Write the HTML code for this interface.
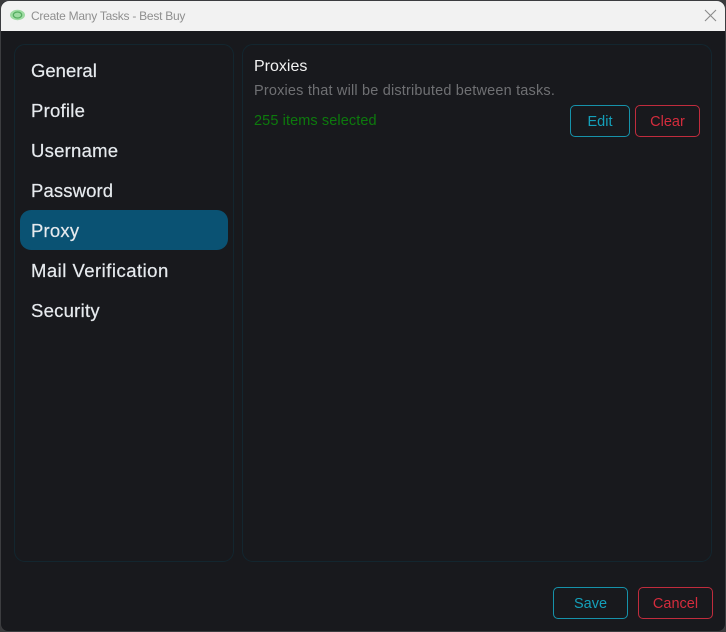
<!DOCTYPE html>
<html><head><meta charset="utf-8"><style>
html,body{margin:0;padding:0;background:#3a3a3c;}
body{width:726px;height:632px;position:relative;overflow:hidden;font-family:"Liberation Sans",sans-serif;}
.win{position:absolute;left:0;top:0;width:724px;height:630px;background:#18191d;border:1px solid #3c3d40;border-radius:8px;overflow:hidden;}
.abs{position:absolute;white-space:nowrap;}
.panel{position:absolute;border:1px solid #13262f;border-radius:11px;box-sizing:border-box;}
.nav{position:absolute;left:31px;font-size:18.5px;line-height:24px;color:#e6eaee;white-space:nowrap;-webkit-text-stroke:0.2px #e6eaee;}
.btn{position:absolute;box-sizing:border-box;border:1px solid;border-radius:5px;text-align:center;font-size:14.5px;white-space:nowrap;}
.blue{border-color:#1692aa;color:#14a0ba;}
.red{border-color:#c02c3d;color:#d42c3d;}
</style></head><body>
<div class="win"></div>
<div class="abs" style="left:1px;top:1px;width:724px;height:30px;background:#f2f2f2;border-radius:8px 8px 0 0;"></div>
<svg class="abs" style="left:9px;top:9px" width="17" height="12" viewBox="0 0 17 12"><ellipse cx="8.5" cy="6" rx="7.5" ry="5.2" fill="#9edba2"/><ellipse cx="8.5" cy="6" rx="4.2" ry="3" fill="none" stroke="#55ad60" stroke-width="1.3"/></svg>
<div class="abs" style="left:31px;top:9px;font-size:12px;line-height:15px;letter-spacing:-0.25px;color:#8f8f8f;">Create Many Tasks - Best Buy</div>
<svg class="abs" style="left:704px;top:9px" width="13" height="13" viewBox="0 0 13 13"><path d="M1 1L12 12M12 1L1 12" stroke="#8a8a8a" stroke-width="1.1" fill="none"/></svg>

<div class="panel" style="left:14px;top:44px;width:220px;height:518px;"></div>
<div class="panel" style="left:242px;top:44px;width:470px;height:518px;"></div>
<div class="abs" style="left:20px;top:210px;width:208px;height:40px;background:#0a5273;border-radius:11px;"></div>

<div class="nav" style="top:59px;">General</div>
<div class="nav" style="top:99px;letter-spacing:0.25px;">Profile</div>
<div class="nav" style="top:139px;letter-spacing:0.25px;">Username</div>
<div class="nav" style="top:179px;letter-spacing:0.12px;">Password</div>
<div class="nav" style="top:219px;letter-spacing:0.2px;">Proxy</div>
<div class="nav" style="top:259px;letter-spacing:0.48px;">Mail Verification</div>
<div class="nav" style="top:299px;letter-spacing:0.25px;">Security</div>

<div class="abs" style="left:254px;top:57px;font-size:16px;line-height:19px;color:#f2f2f2;">Proxies</div>
<div class="abs" style="left:254px;top:83px;font-size:14.5px;line-height:17px;letter-spacing:0.18px;color:#6f7073;">Proxies that will be distributed between tasks.</div>
<div class="abs" style="left:254px;top:113px;font-size:14.5px;line-height:17px;letter-spacing:0.1px;color:#0d7a0d;">255 items selected</div>

<div class="btn blue" style="left:570px;top:105px;width:60px;height:32px;line-height:32px;">Edit</div>
<div class="btn red" style="left:635px;top:105px;width:65px;height:32px;line-height:32px;">Clear</div>
<div class="btn blue" style="left:553px;top:587px;width:75px;height:32px;line-height:32px;">Save</div>
<div class="btn red" style="left:638px;top:587px;width:75px;height:32px;line-height:32px;">Cancel</div>
</body></html>
